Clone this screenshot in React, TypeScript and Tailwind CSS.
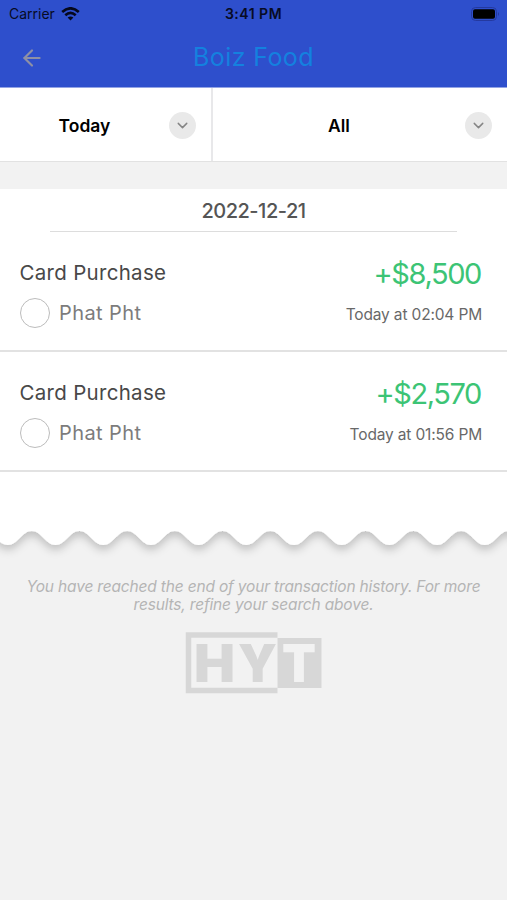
import { ArrowLeft, ChevronDown } from "lucide-react";

type Transaction = {
    id: number;
    title: string;
    name: string;
    amount: string;
    time: string;
};

const transactions: Transaction[] = [
    { id: 1, title: "Card Purchase", name: "Phat Pht", amount: "+$8,500", time: "Today at 02:04 PM" },
    { id: 2, title: "Card Purchase", name: "Phat Pht", amount: "+$2,570", time: "Today at 01:56 PM" },
];

// one wave is 47.7 wide, crest at y=1 and trough at y=15
// the path starts above the svg so that the shadow only shows under the edge
const PERIOD = 47.7;
let wave = "M-39.8 -30 V15";
for (let i = 0; i < 12; i++) {
    const x = -39.8 + i * PERIOD;
    wave += ` C${x + 10} 15 ${x + 14} 1 ${x + PERIOD / 2} 1 S${x + PERIOD - 10} 15 ${x + PERIOD} 15`;
}
wave += " V-30 Z";

function StatusBar() {
    return (
        <div className="relative flex h-[27px] items-center justify-between pl-[9px] pr-[7px] text-[14px] text-[#070b24]">
            <div className="flex items-center gap-[6px]">
                <span>Carrier</span>
                <svg width="19" height="14" viewBox="0 0 19 14" fill="none" stroke="#05081c" strokeWidth="2.7">
                    <path d="M1.2 5 Q9.5 -2.3 17.8 5" />
                    <path d="M4.3 8.2 Q9.5 3.7 14.7 8.2" />
                    <path d="M6.6 10.5 Q9.5 8.3 12.4 10.5 L9.5 13.5 Z" fill="#05081c" stroke="none" />
                </svg>
            </div>
            <span className="absolute inset-x-0 text-center font-semibold tracking-[0.5px]">3:41 PM</span>
            <svg width="29" height="14" viewBox="0 0 29 14">
                <rect x="0.5" y="0.5" width="25" height="13" rx="4" fill="none" stroke="#24399f" />
                <rect x="2" y="2.3" width="22" height="9.5" rx="2" fill="#000000" />
                <path d="M27 5 Q29 7 27 9 Z" fill="#24399f" />
            </svg>
        </div>
    );
}

function Filter({ label }: { label: string }) {
    return (
        <div className="flex flex-1 items-center pr-[15px] pt-[2px]">
            <span className="flex-1 pt-px text-center text-[17.5px] font-semibold text-black">{label}</span>
            <span className="flex size-[27px] items-center justify-center rounded-full bg-[#e9e9e9]">
                <ChevronDown size={17} strokeWidth={2} color="#858585" />
            </span>
        </div>
    );
}

function TransactionRow({ transaction }: { transaction: Transaction }) {
    return (
        <div className="flex h-[120px] justify-between border-b-2 border-[#e2e2e2] pl-[19.5px] pr-[25px]">
            <div className="pt-[26px]">
                <h2 className="text-[20.5px] leading-[30px] tracking-[0.3px] text-[#484848]">{transaction.title}</h2>
                <div className="mt-[10px] flex items-center gap-[9.5px]">
                    <span className="size-[30px] rounded-full border-[1.5px] border-[#bcbcbc]" />
                    <span className="text-[20px] leading-[30px] tracking-[0.4px] text-[#7c7c7c]">{transaction.name}</span>
                </div>
            </div>
            <div className="pt-[25px] text-right">
                <p className="mr-px text-[29px] leading-[34px] tracking-[-1.4px] text-[#3cc475]">{transaction.amount}</p>
                <p className="mt-[14px] text-[15.5px] leading-[20px] tracking-[-0.16px] text-[#686868]">{transaction.time}</p>
            </div>
        </div>
    );
}

function Logo() {
    return (
        <svg className="mx-auto mt-[18px]" width="137" height="63" viewBox="0 0 137 63" fill="#d7d7d7">
            <path d="M92.5 3 H3.5 V58.5 H92.5" fill="none" stroke="#d7d7d7" strokeWidth="5.5" />
            <rect x="92.5" y="6" width="44" height="50" />
            <g fontFamily="Inter" fontSize="52" fontWeight="900">
                <text x="9" y="50" textLength="41" lengthAdjust="spacingAndGlyphs">H</text>
                <text x="53" y="50" textLength="39" lengthAdjust="spacingAndGlyphs">Y</text>
                <text x="97" y="50" textLength="34" lengthAdjust="spacingAndGlyphs" fill="#f2f2f2">T</text>
            </g>
        </svg>
    );
}

export default function App() {
    return (
        <div className="h-[900px] w-full overflow-hidden bg-[#f2f2f2] font-['Inter',sans-serif]">
            <header className="h-[88px] border-b border-[#93a4e4] bg-[#2e4fcc]">
                <StatusBar />
                <div className="relative flex h-[61px] items-center pl-[19px]">
                    <ArrowLeft size={26} strokeWidth={2} color="#8e90a5" />
                    <h1 className="absolute inset-x-0 pt-px text-center text-[25px] tracking-[0.4px] text-[#1481df]">Boiz Food</h1>
                </div>
            </header>

            <div className="flex h-[74px] border-b-[1.5px] border-[#e2e2e2] bg-white">
                <div className="flex w-[213px] border-r-2 border-[#e8e8ea]">
                    <Filter label="Today" />
                </div>
                <Filter label="All" />
            </div>

            <main className="mt-[27px]">
                <div className="bg-white">
                    <div className="mx-[50px] h-[43px] border-b border-[#dddddd] text-center text-[20px] font-medium leading-[44px] tracking-[-0.5px] text-[#555555]">
                        2022-12-21
                    </div>
                    {transactions.map((transaction) => (
                        <TransactionRow key={transaction.id} transaction={transaction} />
                    ))}
                    <div className="h-[58px]" />
                </div>
                <svg className="block overflow-visible" width="507" height="16" viewBox="0 0 507 16">
                    <defs>
                        <filter id="shade" x="-10%" y="0%" width="120%" height="200%">
                            <feDropShadow dx="0" dy="5" stdDeviation="4" floodColor="#000000" floodOpacity="0.2" />
                        </filter>
                    </defs>
                    <path d={wave} fill="#ffffff" filter="url(#shade)" />
                </svg>
                <p className="mt-[32px] text-center text-[15.5px] italic leading-[18px] tracking-[-0.17px] text-[#b5b5b5]">
                    You have reached the end of your transaction history. For more
                    <br />
                    results, refine your search above.
                </p>
                <Logo />
            </main>
        </div>
    );
}
